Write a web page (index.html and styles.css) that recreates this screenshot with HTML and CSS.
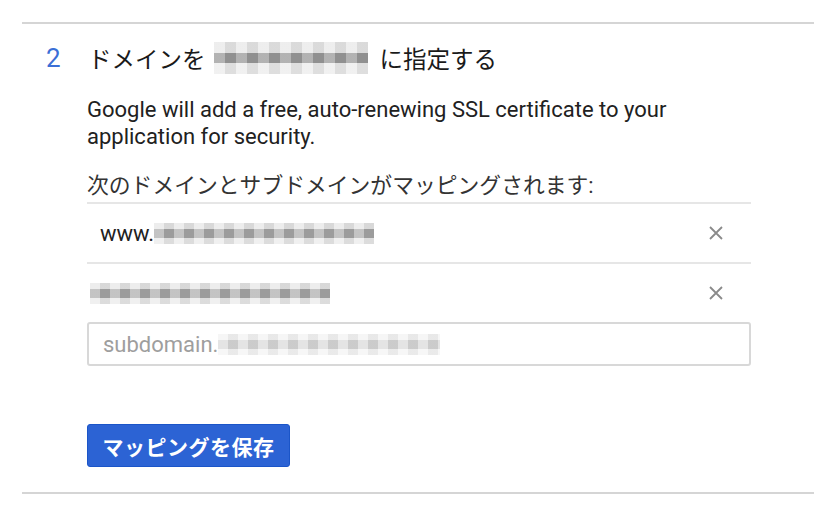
FILE: index.html
```html
<!DOCTYPE html>
<html lang="ja">
<head>
<meta charset="utf-8">
<title>ドメインを指定する</title>
<link rel="stylesheet" href="styles.css">
</head>
<body>
<section class="step">
  <div class="step-head">
    <span class="step-num">2</span>
    <h2 class="step-title">ドメインを <span class="mosaic mosaic-title"><span class="hidden-text">example.com</span></span> に指定する</h2>
  </div>
  <div class="step-body">
    <p class="desc">Google will add a free, auto-renewing SSL certificate to your application for security.</p>
    <p class="list-label">次のドメインとサブドメインがマッピングされます:</p>
    <ul class="domains">
      <li class="domain-row">
        <span class="domain-name">www.<span class="mosaic mosaic-dark"><span class="hidden-text">example-domain.com</span></span></span>
        <button class="remove" aria-label="削除"><svg viewBox="0 0 16 16" width="16" height="16"><path d="M2 2 L14 14 M14 2 L2 14" stroke="#8a8a8a" stroke-width="1.8" fill="none"/></svg></button>
      </li>
      <li class="domain-row no-border">
        <span class="domain-name"><span class="mosaic mosaic-dark mosaic-wide"><span class="hidden-text">example-domain.com</span></span></span>
        <button class="remove" aria-label="削除"><svg viewBox="0 0 16 16" width="16" height="16"><path d="M2 2 L14 14 M14 2 L2 14" stroke="#8a8a8a" stroke-width="1.8" fill="none"/></svg></button>
      </li>
    </ul>
    <div class="subdomain-input">
      <span class="placeholder">subdomain.</span><span class="mosaic mosaic-light"><span class="hidden-text">example-domain.com</span></span>
    </div>
    <button class="save">マッピングを保存</button>
  </div>
</section>
</body>
</html>
```
FILE: styles.css
```css
* { box-sizing: border-box; }
body {
  margin: 0;
  background: #fff;
  font-family: Roboto, "Noto Sans CJK JP", sans-serif;
  color: #212121;
}
.step {
  margin: 22px 20px 0 22px;
  border-top: 2px solid #d5d5d5;
  border-bottom: 2px solid #d5d5d5;
  height: 472px;
  padding-top: 16px;
}
.step-head {
  display: flex;
  align-items: center;
  height: 36px;
}
.step-num {
  width: 66px;
  padding-left: 24px;
  color: #3b6fd6;
  font-size: 26px;
  font-family: Roboto, sans-serif;
}
.step-title {
  margin: 0;
  font-weight: normal;
  font-size: 23.5px;
  font-family: "Noto Sans CJK JP", sans-serif;
  color: #1a1a1a;
  display: flex;
  align-items: center;
}
.mosaic {
  display: inline-block;
  position: relative;
  vertical-align: middle;
}
.hidden-text { visibility: hidden; }
.mosaic-title {
  width: 154px;
  height: 32px;
  margin: 0 12px 0 8px;
  background:
    repeating-linear-gradient(90deg, rgba(255,255,255,0.25) 0 11px, rgba(0,0,0,0.06) 11px 22px),
    linear-gradient(#e8e8e8 0 33%, #999 33% 67%, #ececec 67%);
  overflow: hidden;
}
.mosaic-title .hidden-text { font-size: 10px; }
.step-body {
  padding-left: 65px;
  width: 729px;
}
.desc {
  margin: 20px 0 0;
  font-size: 22px;
  line-height: 27px;
  color: #212121;
}
.list-label {
  margin: 22px 0 0;
  font-size: 21.8px;
  line-height: 27px;
  color: #333;
}
.domains {
  list-style: none;
  margin: 3px 0 0;
  padding: 0;
}
.domain-row {
  display: flex;
  align-items: center;
  justify-content: space-between;
  height: 60px;
  border-top: 2px solid #e6e6e6;
  padding: 0 27px 0 13px;
}
.domain-name {
  font-size: 22px;
  display: flex;
  align-items: center;
}
.mosaic-dark {
  width: 220px;
  height: 21px;
  background:
    repeating-linear-gradient(90deg, rgba(255,255,255,0.35) 0 10px, rgba(0,0,0,0.05) 10px 20px),
    linear-gradient(#e4e4e4 0 30%, #a4a4a4 30% 70%, #e8e8e8 70%);
  overflow: hidden;
}
.mosaic-wide { width: 240px; margin-left: -10px; }
.mosaic-dark .hidden-text, .mosaic-light .hidden-text { font-size: 8px; }
.remove {
  border: 0;
  background: none;
  padding: 0;
  width: 16px;
  height: 16px;
  display: flex;
}
.subdomain-input {
  height: 44px;
  border: 2px solid #d8d8d8;
  border-radius: 3px;
  display: flex;
  align-items: center;
  padding-left: 14px;
  font-size: 22px;
  color: #9e9e9e;
}
.mosaic-light {
  width: 222px;
  height: 21px;
  background:
    repeating-linear-gradient(90deg, rgba(255,255,255,0.4) 0 10px, rgba(0,0,0,0.03) 10px 20px),
    linear-gradient(#f0f0f0 0 30%, #d2d2d2 30% 70%, #f2f2f2 70%);
  overflow: hidden;
}
.save {
  margin-top: 58px;
  width: 203px;
  height: 43px;
  background: #2c63d4;
  border: 1px solid #1b55c8;
  border-radius: 3px;
  color: #fff;
  font-family: "Noto Sans CJK JP", sans-serif;
  font-weight: bold;
  font-size: 21px;
  letter-spacing: 0.5px;
  padding: 0;
}
```
